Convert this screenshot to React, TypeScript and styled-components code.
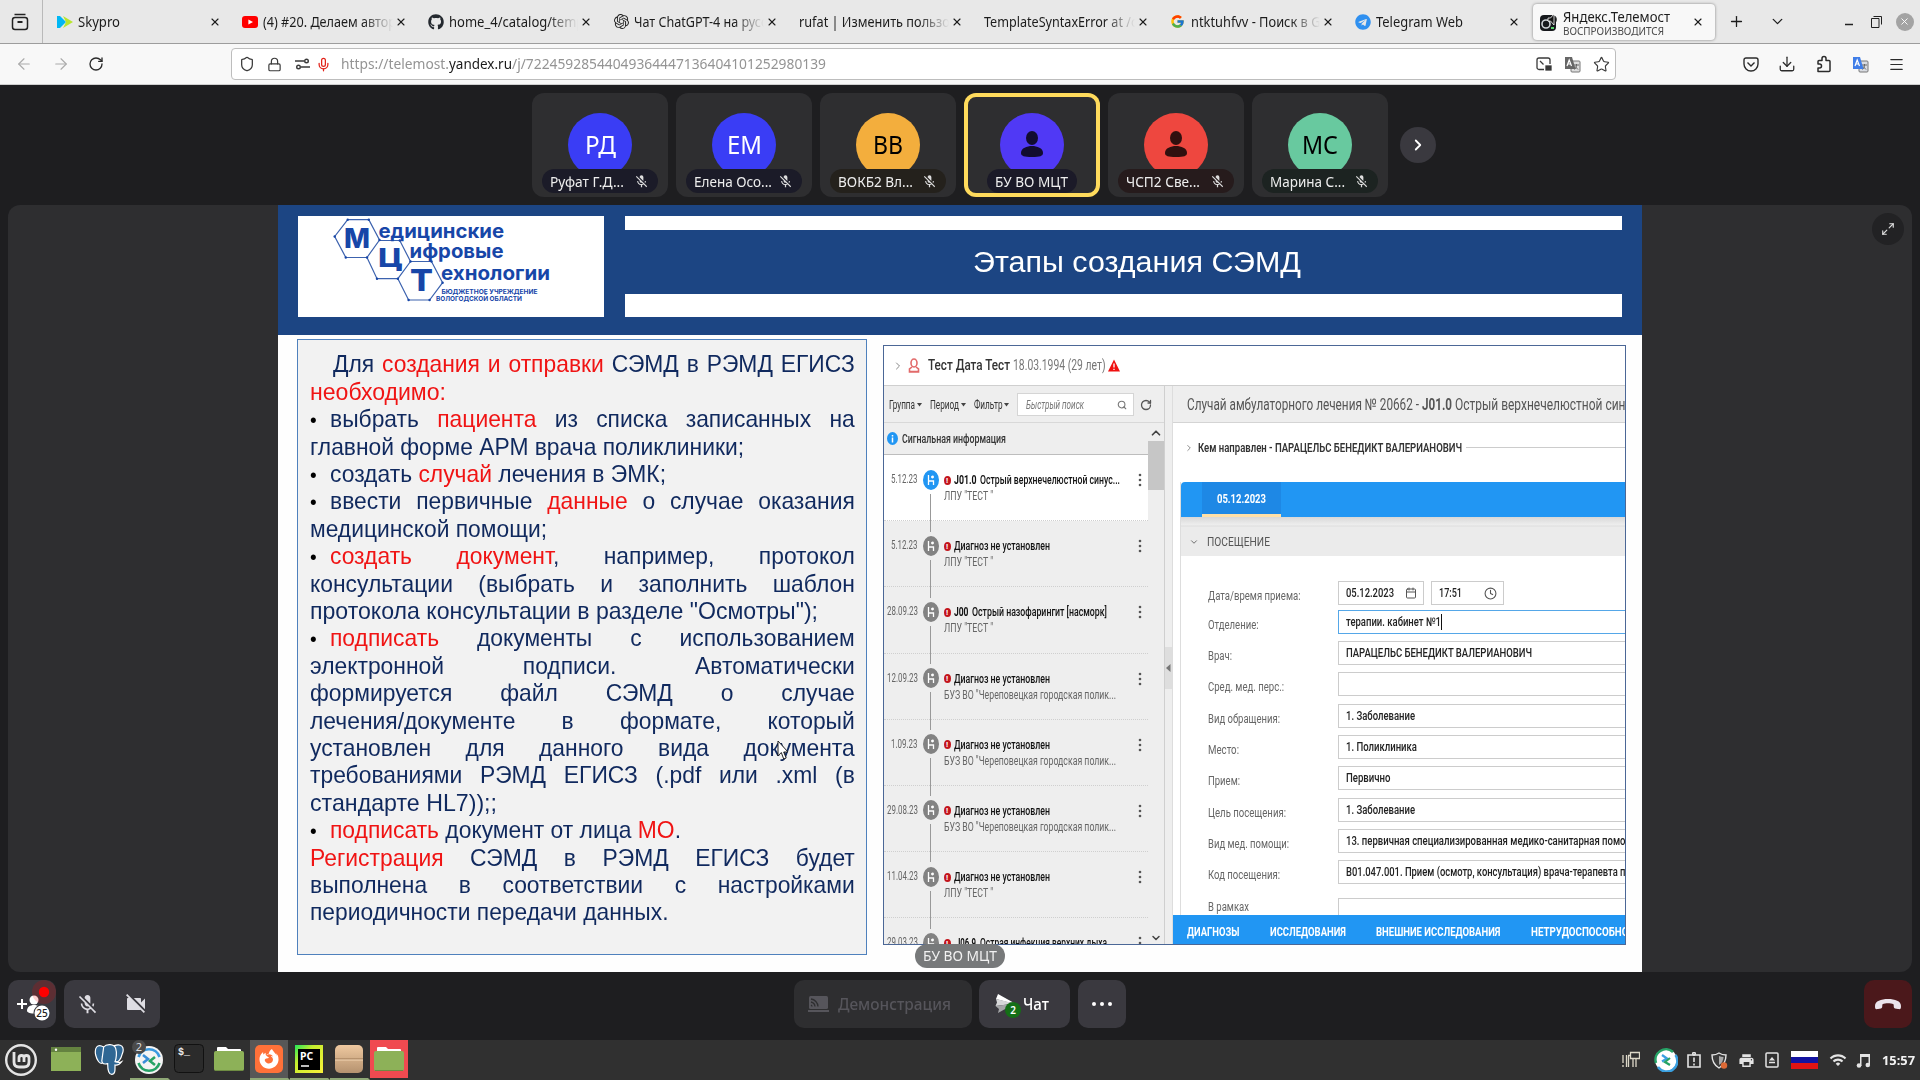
import React, { useLayoutEffect, useRef } from "react";
import styled, { createGlobalStyle, css } from "styled-components";
import {
  ArrowLeft, ArrowRight, ChevronDown, ChevronRight, ChevronUp, Download, Lock, Menu, Plus,
  RotateCw, Search, Shield, Star, X, Calendar, Clock, Mic, Maximize2,
} from "lucide-react";
import { FaGithub, FaTelegram, FaFirefoxBrowser } from "react-icons/fa";
import { FcGoogle } from "react-icons/fc";
import { SiOpenai } from "react-icons/si";
import { MdMicOff, MdVideocamOff, MdPrint, MdWifi } from "react-icons/md";

const ui = `"Noto Sans", "Open Sans", sans-serif`;
const arial = `"Liberation Sans", Arial, sans-serif`;
const roboto = `Roboto, "Noto Sans", sans-serif`;

const Global = createGlobalStyle`
  *, *::before, *::after { box-sizing: border-box; }
  body { margin: 0; background: #1e1e20; overflow: hidden; }
  svg { display: block; flex: none; }
`;

/* ---------- text of a fixed width ---------- */

const FitBox = styled.span<{ $w: number }>`
  display: inline-block;
  flex: none;
  width: ${(p) => p.$w}px;
  white-space: pre;
`;
const FitInner = styled.span`
  display: inline-block;
  white-space: pre;
  transform-origin: 0 50%;
`;

function Fit({ w, children }: { w: number; children: React.ReactNode }) {
  const ref = useRef<HTMLSpanElement>(null);
  useLayoutEffect(() => {
    const el = ref.current;
    if (!el) return;
    const natural = parseFloat(getComputedStyle(el).width);
    if (natural > 0) el.style.transform = `scaleX(${w / natural})`;
  }, [w, children]);
  return (
    <FitBox $w={w}>
      <FitInner ref={ref}>{children}</FitInner>
    </FitBox>
  );
}

/* ---------- browser ---------- */

const Screen = styled.div`
  width: 1920px;
  height: 1080px;
  display: flex;
  flex-direction: column;
  overflow: hidden;
  background: #1e1e20;
  font-family: ${ui};
`;
const TabStrip = styled.div`
  height: 44px;
  flex: none;
  display: flex;
  align-items: center;
  background: #e8e8e8;
  border-bottom: 1px solid #9d9d9d;
  color: #1c1c1c;
`;
const FirefoxView = styled.div`
  width: 43px;
  height: 43px;
  margin-right: 4.500px;
  padding-left: 11px;
  flex: none;
  display: flex;
  align-items: center;
  border-right: 1px solid #b9b9b9;
`;
const Tab = styled.div<{ $active?: boolean }>`
  width: ${(p) => (p.$active ? 182 : 185.5)}px;
  height: 36px;
  flex: none;
  display: flex;
  align-items: center;
  padding: 0 10px 0 9px;
  font-size: 13.5px;
  ${(p) =>
    p.$active &&
    css`
      margin-left: 1px;
      padding: 0 9px 0 8px;
      background: #f8f8f8;
      border-radius: 4px;
      box-shadow: 0 0 3px rgba(0, 0, 0, 0.45);
    `}
`;
const TabIcon = styled.span`
  width: 16px;
  height: 16px;
  margin-right: 5px;
  flex: none;
  display: flex;
  align-items: center;
  justify-content: center;
`;
const TabTitle = styled.span<{ $fade?: boolean }>`
  flex: 1;
  min-width: 0;
  overflow: hidden;
  display: flex;
  flex-direction: column;
  line-height: 18px;
  ${(p) => p.$fade && css`mask-image: linear-gradient(to right, #000 calc(100% - 30px), transparent);`}
`;
const TabStatus = styled.span`
  font-size: 10px;
  line-height: 10px;
  color: #4a4a4a;
`;
const CloseSlot = styled.span`
  width: 16px;
  flex: none;
  display: flex;
  justify-content: center;
`;
const WindowButtons = styled.div`
  flex: 1;
  display: flex;
  align-items: center;
  padding: 0 9px 0 13px;
`;
const Gap = styled.span<{ $w: number }>`
  width: ${(p) => p.$w}px;
  flex: none;
`;
const WindowClose = styled.span`
  width: 18px;
  height: 18px;
  flex: none;
  border-radius: 50%;
  background: #a3a3a3;
  color: #fff;
  display: flex;
  align-items: center;
  justify-content: center;
`;
const NavBar = styled.div`
  height: 41px;
  flex: none;
  display: flex;
  align-items: center;
  padding: 0 15px 0 14px;
  background: #f8f8f8;
  border-bottom: 1px solid #cfcfcf;
  color: #2b2b2b;
`;
const NavButtons = styled.div`
  width: 217px;
  flex: none;
  display: flex;
  align-items: center;
  padding-left: 1px;
  gap: 18.500px;
`;
const Dim = styled.span`
  color: #aaa;
`;
const UrlBar = styled.div`
  width: 1385px;
  height: 32px;
  flex: none;
  display: flex;
  align-items: center;
  padding: 0 5px 0 7px;
  background: #fff;
  border: 1px solid #bdbdbd;
  border-radius: 4px;
  font-size: 13.5px;
  color: #949494;
`;
const UrlHost = styled.span`
  color: #1a1a1a;
`;
const UrlIcons = styled.span`
  margin-left: auto;
  display: flex;
  align-items: center;
  gap: 12px;
  color: #3a3a3a;
`;
const NavRight = styled.div`
  margin-left: auto;
  display: flex;
  align-items: center;
  gap: 19px;
`;

interface TabData { icon?: React.ReactNode; title: string; w: number; fade?: boolean }

const YoutubeIcon = () => (
  <svg width="16" height="16" viewBox="0 0 16 16">
    <rect y="2" width="16" height="12" rx="3" fill="#f00" />
    <path d="M6.4 5.4v5.2L11 8z" fill="#fff" />
  </svg>
);

const tabs: TabData[] = [
  { icon: <svg width="16" height="16" viewBox="0 0 16 16"><path d="M0 2h3l6 6-6 6H0z" fill="#00b7f4" /><path d="M6 2l10 6-10 6 3-6z" fill="#b8e62e" /></svg>, title: "Skypro", w: 42 },
  { icon: <YoutubeIcon />, title: "(4) #20. Делаем авториз", w: 147, fade: true },
  { icon: <FaGithub size={16} color="#24292f" />, title: "home_4/catalog/templa", w: 146, fade: true },
  { icon: <SiOpenai size={15} color="#222" />, title: "Чат ChatGPT-4 на русско", w: 147, fade: true },
  { title: "rufat | Изменить пользов", w: 158, fade: true },
  { title: "TemplateSyntaxError at /ca", w: 160, fade: true },
  { icon: <FcGoogle size={15} />, title: "ntktuhfvv - Поиск в Goo", w: 145, fade: true },
  { icon: <FaTelegram size={16} color="#2f90f0" />, title: "Telegram Web", w: 87 },
];

function Browser() {
  return (
    <>
      <TabStrip>
        <FirefoxView>
          <svg width="18" height="18" viewBox="0 0 18 18" fill="none" stroke="#222" strokeWidth="1.5">
            <path d="M3.5 1.5h11" /><rect x="1.5" y="4.5" width="15" height="12" rx="2.5" /><path d="M6.5 9h5" strokeWidth="2" />
          </svg>
        </FirefoxView>
        {tabs.map((t) => (
          <Tab key={t.title}>
            {t.icon && <TabIcon>{t.icon}</TabIcon>}
            <TabTitle $fade={t.fade}><Fit w={t.w}>{t.title}</Fit></TabTitle>
            <CloseSlot><X size={12} strokeWidth={2.2} /></CloseSlot>
          </Tab>
        ))}
        <Tab $active>
          <TabIcon>
            <svg width="18" height="18" viewBox="0 0 18 18">
              <rect y="2" width="16" height="16" rx="4" fill="#16181c" />
              <circle cx="6" cy="11" r="4" fill="none" stroke="#cfd3d8" strokeWidth="1.6" />
              <path d="M8 5h2.5L14 1v11l-3.500-4H8z" fill="#111" stroke="#fff" strokeWidth=".8" />
              <path d="M15.500 3.500q2 3 0 6" stroke="#222" fill="none" />
              <path d="M11 15h3" stroke="#58d36c" strokeWidth="2" />
            </svg>
          </TabIcon>
          <Gap $w={1} />
          <TabTitle>
            <Fit w={107}>Яндекс.Телемост</Fit>
            <TabStatus><Fit w={101}>ВОСПРОИЗВОДИТСЯ</Fit></TabStatus>
          </TabTitle>
          <CloseSlot><X size={12} strokeWidth={2.2} /></CloseSlot>
        </Tab>
        <WindowButtons>
          <Plus size={17} strokeWidth={1.8} />
          <Gap $w={24} />
          <ChevronDown size={17} strokeWidth={1.8} />
          <Gap $w={58} />
          <svg width="10" height="12" viewBox="0 0 10 12"><path d="M1 8.500h8" stroke="#222" strokeWidth="1.500" /></svg>
          <Gap $w={17} />
          <svg width="11" height="12" viewBox="0 0 11 12" fill="none" stroke="#222"><path d="M2.500.5h8v8M.5 2.500h7.500v9H.5z" /></svg>
          <Gap $w={14} />
          <WindowClose><X size={11} /></WindowClose>
        </WindowButtons>
      </TabStrip>
      <NavBar>
        <NavButtons>
          <Dim><ArrowLeft size={18} strokeWidth={1.5} /></Dim>
          <Dim><ArrowRight size={18} strokeWidth={1.5} /></Dim>
          <RotateCw size={16} strokeWidth={2} />
        </NavButtons>
        <UrlBar>
          <Shield size={16} color="#3a3a3a" strokeWidth={1.9} />
          <Gap $w={12} />
          <Lock size={15} color="#3a3a3a" strokeWidth={1.9} />
          <Gap $w={13} />
          <svg width="15" height="12" viewBox="0 0 15 12" fill="none" stroke="#3a3a3a" strokeWidth="1.400"><path d="M0 3h9M6 9h9" /><circle cx="11.500" cy="3" r="1.800" /><circle cx="3.500" cy="9" r="1.800" /></svg>
          <Gap $w={6} />
          <Mic size={15} color="#e2231a" strokeWidth={2} />
          <Gap $w={10} />
          <Fit w={108}>https://telemost.</Fit>
          <UrlHost><Fit w={63}>yandex.ru</Fit></UrlHost>
          <Fit w={314}>/j/72245928544049364447136404101252980139</Fit>
          <UrlIcons>
            <svg width="16" height="14" viewBox="0 0 16 14" fill="none" stroke="#3a3a3a" strokeWidth="1.300"><path d="M8 12.500H3a2 2 0 0 1-2-2V3a2 2 0 0 1 2-2h9a2 2 0 0 1 2 2v4M4 4l3.500 3.500" /><rect x="10" y="9" width="5" height="4" fill="#3a3a3a" /></svg>
            <Translate back="#666" front="#ddd" />
            <Star size={17} strokeWidth={1.6} />
          </UrlIcons>
        </UrlBar>
        <NavRight>
          <svg width="16" height="15" viewBox="0 0 16 15" fill="none" stroke="#2b2b2b" strokeWidth="1.400"><path d="M1 3a2 2 0 0 1 2-2h10a2 2 0 0 1 2 2v4a7 7 0 0 1-14 0z" /><path d="M4.500 5.500L8 9l3.500-3.500" /></svg>
          <Download size={18} strokeWidth={1.7} />
          <svg width="18" height="18" viewBox="0 0 18 18" fill="none" stroke="#2b2b2b" strokeWidth="1.500" strokeLinejoin="round"><path d="M3 16.500h11q1 0 1-1V6.500q0-1-1-1h-3V3.500a2 2 0 0 0-4 0v2H4q-1 0-1 1V9h1.500a2 2 0 0 1 0 4H3z" /></svg>
          <Translate back="#3f7de8" front="#d9dce2" />
          <Menu size={17} strokeWidth={1.7} />
        </NavRight>
      </NavBar>
    </>
  );
}

function Translate({ back, front }: { back: string; front: string }) {
  return (
    <svg width="17" height="17" viewBox="0 0 17 17">
      <rect x="7" y="5" width="9" height="11" rx="1" fill={front} stroke="#777" />
      <path d="M10 9h5M12.500 8v1q0 3-2 4.500M11 10.500l3 3" stroke="#666" fill="none" />
      <path d="M1 1h7l3.500 12H1z" fill={back} />
      <path d="M3 10l2.200-6L7.500 10M3.700 8h3" stroke="#fff" fill="none" strokeWidth="1.200" />
    </svg>
  );
}

/* ---------- participants ---------- */

const Participants = styled.div`
  height: 120px;
  flex: none;
  display: flex;
  align-items: flex-start;
  justify-content: flex-start;
  gap: 8px;
  padding: 8px 0 0 532px;
`;
const Tile = styled.div<{ $active?: boolean }>`
  width: 136px;
  height: 104px;
  display: flex;
  flex-direction: column;
  align-items: center;
  padding-top: 20px;
  border-radius: 12px;
  background: #2e2e30;
  box-shadow: ${(p) => (p.$active ? "inset 0 0 0 4px #ffdb5c" : "none")};
`;
const Avatar = styled.div<{ $bg: string; $fg: string }>`
  width: 64px;
  height: 64px;
  flex: none;
  border-radius: 50%;
  display: flex;
  align-items: center;
  justify-content: center;
  padding-bottom: 2px;
  background: ${(p) => p.$bg};
  color: ${(p) => p.$fg};
  font-size: 25px;
`;
const NameTag = styled.div<{ $bg: string; $w: number }>`
  width: ${(p) => p.$w}px;
  height: 24px;
  margin-top: -8px;
  z-index: 1;
  display: flex;
  align-items: center;
  justify-content: space-between;
  padding: 0 9px 0 8px;
  border-radius: 12px;
  background: ${(p) => p.$bg};
  color: #eee;
  font-size: 14px;
  line-height: 23px;
`;
const NextButton = styled.div`
  width: 36px;
  height: 36px;
  margin: 34px 0 0 4px;
  border-radius: 50%;
  background: #3a393f;
  color: #fff;
  display: flex;
  align-items: center;
  justify-content: center;
`;

const people = [
  { initials: "РД", iw: 31, name: "Руфат Г.Д...", w: 74, bg: "#3a3df5", fg: "#fff", tag: "#1b1b28", muted: true },
  { initials: "ЕМ", iw: 35, name: "Елена Осо...", w: 78, bg: "#3a3df5", fg: "#fff", tag: "#1b1b28", muted: true },
  { initials: "ВВ", iw: 30, name: "ВОКБ2 Вл...", w: 75, bg: "#f3ae3d", fg: "#000", tag: "#24211c", muted: true },
  { initials: "", iw: 0, name: "БУ ВО МЦТ", w: 73, bg: "#5039f5", fg: "#120c30", tag: "#1b1a28", active: true },
  { initials: "", iw: 0, name: "ЧСП2 Све...", w: 74, bg: "#ee473f", fg: "#30100f", tag: "#261b1c", muted: true },
  { initials: "МС", iw: 36, name: "Марина С...", w: 75, bg: "#68c99f", fg: "#000", tag: "#1c2321", muted: true },
];

function ParticipantStrip() {
  return (
    <Participants>
      {people.map((p) => (
        <Tile key={p.name} $active={p.active}>
          <Avatar $bg={p.bg} $fg={p.fg}>
            {p.initials ? <Fit w={p.iw}>{p.initials}</Fit> : (
              <svg width="22" height="28" viewBox="0 0 22 28" fill={p.fg}><ellipse cx="11" cy="8" rx="6" ry="7" /><path d="M0 23c0-5 6-7 11-7s11 2 11 7c0 3-3 4-11 4S0 26 0 23z" /></svg>
            )}
          </Avatar>
          <NameTag $bg={p.tag} $w={p.muted ? 116 : 90}>
            <Fit w={p.w}>{p.name}</Fit>
            {p.muted && <MdMicOff size={15} color="#ddd" />}
          </NameTag>
        </Tile>
      ))}
      <NextButton><ChevronRight size={18} strokeWidth={2.4} /></NextButton>
    </Participants>
  );
}

/* ---------- slide ---------- */

const Stage = styled.div`
  height: 767px;
  margin: 0 8px;
  flex: none;
  display: flex;
  justify-content: center;
  border-radius: 12px;
  background: #2e2e30;
  position: relative;
`;
const ExpandButton = styled.div`
  position: absolute;
  right: 8px;
  top: 8px;
  width: 32px;
  height: 32px;
  border-radius: 50%;
  background: #222224;
  color: #ddd;
  display: flex;
  align-items: center;
  justify-content: center;
`;
const SpeakerTag = styled.div`
  position: absolute;
  left: 907px;
  top: 739px;
  width: 90px;
  height: 24px;
  border-radius: 12px;
  background: #77797a;
  color: #f2f2f2;
  font-size: 15px;
  line-height: 23px;
  padding-left: 8px;
`;
const PointerMark = styled.div`
  position: absolute;
  left: 769px;
  top: 535px;
`;
const Slide = styled.div`
  width: 1364px;
  height: 767px;
  background: #fefefe;
  display: flex;
  flex-direction: column;
`;
const SlideHeader = styled.div`
  height: 130px;
  flex: none;
  display: flex;
  padding: 11px 20px 18px 20px;
  gap: 20.500px;
  background: #1c4583;
`;
const LogoBox = styled.div`
  width: 306px;
  height: 101px;
  flex: none;
  background: #fff;
`;
const TitleBox = styled.div`
  flex: 1;
  display: flex;
  align-items: center;
  justify-content: center;
  border-top: 14px solid #fff;
  border-bottom: 23px solid #fff;
  color: #fff;
  font: 29px/40px ${arial};
  padding-left: 28px;
`;
const SlideBody = styled.div`
  flex: 1;
  display: flex;
  align-items: flex-start;
  padding: 4px 16px 0 19px;
  gap: 16px;
`;
const TextPanel = styled.div`
  width: 570px;
  height: 616px;
  flex: none;
  padding: 9.500px 12px 0;
  background: #f2f2f2;
  border: 1px solid #4f81bd;
`;
const K = 0.952;
const Paragraphs = styled.div`
  width: ${544.8 / K}px;
  transform: scaleX(${K});
  transform-origin: 0 0;
  font: 24px/27.400px ${arial};
  color: #10295e;
`;
const Line = styled.div<{ $justify?: boolean; $indent?: number }>`
  height: 27.400px;
  white-space: ${(p) => (p.$justify ? "normal" : "nowrap")};
  padding-left: ${(p) => (p.$indent ?? 0) / K}px;
  text-align-last: ${(p) => (p.$justify ? "justify" : "left")};
  &:first-child {
    height: 28.400px;
  }
`;
const Bullet = styled.span`
  display: inline-block;
  width: ${20 / K}px;
  color: #000;
  font-size: 20px;
  text-align-last: left;
`;
const Red = styled.span`
  color: #f01414;
`;

interface SlideLine { t: string; bullet?: boolean; indent?: number; w?: number }

const slideLines: SlideLine[] = [
  { t: "Для *создания и отправки* СЭМД в РЭМД ЕГИСЗ", indent: 23 },
  { t: "*необходимо:*", w: 136 },
  { t: "выбрать *пациента* из списка записанных на", bullet: true },
  { t: "главной форме АРМ врача поликлиники;", w: 434 },
  { t: "создать *случай* лечения в ЭМК;", bullet: true, w: 336 },
  { t: "ввести первичные *данные* о случае оказания", bullet: true },
  { t: "медицинской помощи;", w: 237 },
  { t: "*создать документ*, например, протокол", bullet: true },
  { t: "консультации (выбрать и заполнить шаблон" },
  { t: "протокола консультации в разделе \"Осмотры\");", w: 508 },
  { t: "*подписать* документы с использованием", bullet: true },
  { t: "электронной подписи. Автоматически" },
  { t: "формируется файл СЭМД о случае" },
  { t: "лечения/документе в формате, который" },
  { t: "установлен для данного вида документа" },
  { t: "требованиями РЭМД ЕГИСЗ (.pdf или .xml (в" },
  { t: "стандарте HL7));;", w: 187 },
  { t: "*подписать* документ от лица *МО*.", bullet: true, w: 351 },
  { t: "*Регистрация* СЭМД в РЭМД ЕГИСЗ будет" },
  { t: "выполнена в соответствии с настройками" },
  { t: "периодичности передачи данных.", w: 358.5 },
];

const marked = (t: string) => t.split("*").map((s, i) => (i % 2 ? <Red key={i}>{s}</Red> : s));

function Logo() {
  const blue = "#1746a8";
  return (
    <svg width="305" height="101" viewBox="298 216 305 101" fontFamily={`Inter, Roboto, sans-serif`} fontWeight="700" fill={blue}>
      <g fill="none" stroke="#3c62ae" strokeWidth="1.200">
        <path d="M347.700 219.700H368.800L379.500 240L367 257.500H345.800L334.700 236.500Z" />
        <path d="M379.500 240.500H399.800L410.500 261.500L397.900 278.700H377L367 257.500" />
        <path d="M410.500 261.500H431.500L442.600 282.700L429.600 300H408.600L397.900 278.700" />
      </g>
      {[[347.7, 219.7], [368.8, 219.7], [334.7, 236.5], [379.5, 240], [367, 257.5], [345.8, 257.5], [399.8, 240.5], [410.5, 261.5], [397.9, 278.7], [377, 278.7], [431.5, 261.5], [442.6, 282.7], [429.6, 300], [408.6, 300]].map(([x, y], i) => (
        <circle key={i} cx={x} cy={y} r="1.200" />
      ))}
      <text x="344" y="247.500" fontSize="27" fontWeight="800" textLength="26" lengthAdjust="spacingAndGlyphs">М</text>
      <text x="378" y="267" fontSize="26" fontWeight="800" textLength="25" lengthAdjust="spacingAndGlyphs">Ц</text>
      <text x="410" y="291" fontSize="30" fontWeight="800" textLength="23" lengthAdjust="spacingAndGlyphs">Т</text>
      <text x="378.500" y="237.500" fontSize="19.500" textLength="125.500" lengthAdjust="spacingAndGlyphs">едицинские</text>
      <text x="409.500" y="258" fontSize="19.500" textLength="94" lengthAdjust="spacingAndGlyphs">ифровые</text>
      <text x="441" y="279.500" fontSize="19.500" textLength="109" lengthAdjust="spacingAndGlyphs">ехнологии</text>
      <text x="441.500" y="293.500" fontSize="6.800" textLength="96" lengthAdjust="spacingAndGlyphs">БЮДЖЕТНОЕ УЧРЕЖДЕНИЕ</text>
      <text x="436" y="300.500" fontSize="6.800" textLength="86" lengthAdjust="spacingAndGlyphs">ВОЛОГОДСКОЙ ОБЛАСТИ</text>
    </svg>
  );
}

/* ---------- medical application shown on the slide ---------- */

const MedFrame = styled.div`
  width: 743.500px;
  height: 600px;
  margin-top: 6px;
  margin-left: -0.500px;
  flex: none;
  display: flex;
  flex-direction: column;
  overflow: hidden;
  border: 1.500px solid #4b6796;
  background: #fff;
  font-family: ${roboto};
  font-size: 12px;
  line-height: 16px;
  color: #333;
`;
const Patient = styled.div`
  height: 40px;
  flex: none;
  display: flex;
  align-items: center;
  padding-left: 8px;
  border-bottom: 1.500px solid #cfcfcf;
  font-size: 14.500px;
  font-weight: 500;
  color: #333;
`;
const Light = styled.span`
  font-weight: 400;
  color: #777;
`;
const Panes = styled.div`
  flex: 1;
  min-height: 0;
  display: flex;
`;
const ListPane = styled.div`
  width: 280px;
  flex: none;
  display: flex;
  flex-direction: column;
  background: #eee;
  overflow: hidden;
`;
const Filters = styled.div`
  height: 37px;
  flex: none;
  display: flex;
  align-items: center;
  padding: 1.500px 0 0 5px;
  border-bottom: 1px solid #d8d8d8;
  font-size: 12px;
`;
const SearchBox = styled.div`
  width: 117px;
  height: 23px;
  display: flex;
  align-items: center;
  justify-content: space-between;
  padding: 0 6px 0 8px;
  background: #fff;
  border: 1px solid #d5d5d5;
  font-style: italic;
  color: #777;
`;
const ListArea = styled.div`
  flex: 1;
  min-height: 0;
  display: flex;
`;
const ListColumn = styled.div`
  width: 264px;
  overflow: hidden;
`;
const ScrollBar = styled.div`
  width: 16px;
  display: flex;
  flex-direction: column;
  align-items: center;
  padding-top: 3px;
  color: #444;
`;
const Thumb = styled.div`
  width: 16px;
  height: 49px;
  margin-top: 1px;
  margin-bottom: auto;
  background: #c6c6c6;
`;
const Signal = styled.div`
  height: 32px;
  display: flex;
  align-items: center;
  padding-left: 3px;
  gap: 4px;
  border-bottom: 1.500px solid #bdbdbd;
  font-weight: 500;
`;
const Item = styled.div<{ $selected?: boolean }>`
  height: 66.200px;
  display: flex;
  border-bottom: 1px dotted #cfcfcf;
  background: ${(p) => (p.$selected ? "#fff" : "transparent")};
`;
const ItemDate = styled.div`
  width: 34px;
  padding-top: 16px;
  display: flex;
  justify-content: flex-end;
  color: #666;
`;
const Rail = styled.div`
  width: 26px;
  height: 66px;
  flex: none;
  padding-top: 14.500px;
  display: flex;
  flex-direction: column;
  align-items: center;
`;
const RailDot = styled.div<{ $bg: string }>`
  width: 16px;
  height: 20px;
  flex: none;
  border-radius: 50%;
  background: ${(p) => p.$bg};
  display: flex;
  align-items: center;
  justify-content: center;
`;
const RailLine = styled.div`
  width: 1px;
  height: 38px;
  flex: none;
  margin-top: 4px;
  background: #999;
`;
const ItemText = styled.div`
  width: 194.500px;
  padding-top: 17px;
  flex: none;
`;
const ItemTitle = styled.div`
  display: flex;
  align-items: center;
  gap: 3.500px;
  color: #111;
  font-weight: 500;
`;
const ItemSub = styled.div`
  color: #666;
`;
const Alert = styled.span`
  width: 7px;
  height: 9px;
  border-radius: 50%;
  background: #c3151c;
  color: #fff;
  display: flex;
  justify-content: center;
  font-size: 8px;
  line-height: 9px;
  font-weight: 700;
`;
const Splitter = styled.div`
  width: 9px;
  flex: none;
  display: flex;
  flex-direction: column;
  background: #eee;
  border-left: 1px solid #cfcfcf;
  border-right: 1px solid #ddd;
`;
const SplitHandle = styled.div`
  margin-top: 261px;
  height: 42px;
  display: flex;
  align-items: center;
  background: #dedede;
`;
const CasePane = styled.div`
  flex: 1;
  min-width: 0;
  display: flex;
  flex-direction: column;
  overflow: hidden;
`;
const CaseHeader = styled.div`
  height: 37px;
  flex: none;
  display: flex;
  align-items: center;
  gap: 3px;
  padding: 2px 0 0 14px;
  background: #eee;
  border-bottom: 1.500px solid #d4d4d4;
  font-size: 16px;
  line-height: 20px;
  color: #555;
  white-space: nowrap;
`;
const Referrer = styled.div`
  height: 49px;
  flex: none;
  display: flex;
  align-items: center;
  gap: 4px;
  padding-left: 11px;
  font-weight: 600;
`;
const Rule = styled.div`
  flex: 1;
  height: 1px;
  background: #ccc;
`;
const VisitCard = styled.div`
  flex: 1;
  min-height: 0;
  margin: 10px 0 0 7px;
  border-left: 1px solid #ddd;
  overflow: hidden;
`;
const DateTabs = styled.div`
  height: 35px;
  padding-left: 21px;
  background: #2196f3;
  border-top-left-radius: 4px;
`;
const DateTab = styled.div`
  width: 79px;
  height: 35px;
  display: flex;
  align-items: center;
  justify-content: center;
  padding-top: 2px;
  background: #1e88e5;
  border-bottom: 3px solid #ffe0a8;
  color: #fff;
  font-weight: 700;
`;
const VisitTitle = styled.div`
  height: 39px;
  display: flex;
  align-items: center;
  gap: 8px;
  padding: 11px 0 0 8px;
  background: linear-gradient(#d8d8d8, #eee 8px, #ddd 9px, #ebebeb 10px);
  font-size: 13px;
  color: #555;
`;
const Form = styled.div`
  padding: 24px 0 0 27px;
`;
const Field = styled.div<{ $h: number }>`
  height: ${(p) => p.$h}px;
  display: flex;
  align-items: center;
`;
const Label = styled.div<{ $raise?: boolean }>`
  width: 130.500px;
  flex: none;
  padding: ${(p) => (p.$raise ? "0 0 6px" : "6px 0 0")};
  color: #666;
`;
const Input = styled.div<{ $w?: number; $focus?: boolean }>`
  width: ${(p) => p.$w ?? 400}px;
  height: 24px;
  flex: none;
  margin-right: 7px;
  display: flex;
  align-items: center;
  justify-content: space-between;
  padding: 0 6px 0 7px;
  border: 1px solid ${(p) => (p.$focus ? "#55a7e8" : "#ccc")};
  font-weight: 500;
  color: #222;
`;
const Caret = styled.span`
  border-right: 1px solid #111;
`;
const Sections = styled.div`
  height: 29px;
  flex: none;
  display: flex;
  align-items: center;
  gap: 30.500px;
  padding: 5px 0 0 14px;
  background: #2196f3;
  color: #fff;
  font-weight: 700;
  overflow: hidden;
`;

const items = [
  { date: "5.12.23", dw: 26.5, code: "J01.0", cw: 22.5, title: "Острый верхнечелюстной синус...", w: 140, sub: "ЛПУ \"ТЕСТ \"", sw: 49, sel: true },
  { date: "5.12.23", dw: 26.5, title: "Диагноз не установлен", w: 96, sub: "ЛПУ \"ТЕСТ \"", sw: 49 },
  { date: "28.09.23", dw: 31, code: "J00", cw: 14.5, title: "Острый назофарингит [насморк]", w: 135, sub: "ЛПУ \"ТЕСТ \"", sw: 49 },
  { date: "12.09.23", dw: 31, title: "Диагноз не установлен", w: 96, sub: "БУЗ ВО \"Череповецкая городская полик...", sw: 172 },
  { date: "1.09.23", dw: 26.5, title: "Диагноз не установлен", w: 96, sub: "БУЗ ВО \"Череповецкая городская полик...", sw: 172 },
  { date: "29.08.23", dw: 31, title: "Диагноз не установлен", w: 96, sub: "БУЗ ВО \"Череповецкая городская полик...", sw: 172 },
  { date: "11.04.23", dw: 31, title: "Диагноз не установлен", w: 96, sub: "ЛПУ \"ТЕСТ \"", sw: 49 },
  { date: "29.03.23", dw: 31, code: " J06.9", cw: 22, title: "Острая инфекция верхних дыха...", w: 134, sub: "", sw: 1 },
];

const fields: { l: string; lw: number; v: string; w: number; focus?: boolean }[] = [
  { l: "Отделение:", lw: 50.5, v: "терапии. кабинет №1", w: 95, focus: true },
  { l: "Врач:", lw: 24, v: "ПАРАЦЕЛЬС БЕНЕДИКТ ВАЛЕРИАНОВИЧ", w: 186 },
  { l: "Сред. мед. перс.:", lw: 76, v: "", w: 0 },
  { l: "Вид обращения:", lw: 72, v: "1. Заболевание", w: 69 },
  { l: "Место:", lw: 31, v: "1. Поликлиника", w: 71 },
  { l: "Прием:", lw: 32, v: "Первично", w: 44.5 },
  { l: "Цель посещения:", lw: 78, v: "1. Заболевание", w: 69 },
  { l: "Вид мед. помощи:", lw: 81, v: "13. первичная специализированная медико-санитарная помощь", w: 293 },
  { l: "Код посещения:", lw: 72, v: "B01.047.001. Прием (осмотр, консультация) врача-терапевта первичный", w: 324 },
];

const Arrow = () => <svg width="5" height="4" viewBox="0 0 5 4"><path d="M0 0h5L2.500 3.500z" fill="#444" /></svg>;

function MedicalApp() {
  return (
    <MedFrame>
      <Patient>
        <ChevronRight size={12} color="#888" />
        <Gap $w={4} />
        <svg width="12" height="15" viewBox="0 0 12 15" fill="none" stroke="#e26a6a" strokeWidth="1.600"><ellipse cx="6" cy="5" rx="3" ry="4" /><path d="M4 9l-2.500 2v3h9v-3L8 9M1 13.500h10" /></svg>
        <Gap $w={8} />
        <Fit w={82}>Тест Дата Тест</Fit>
        <Gap $w={3} />
        <Light><Fit w={92.5}>18.03.1994 (29 лет)</Fit></Light>
        <Gap $w={3} />
        <svg width="12" height="13" viewBox="0 0 12 13"><path d="M6 .5L12 12.500H0z" fill="#f01010" /><path d="M6 4.500v4M6 9.800v1.200" stroke="#fff" strokeWidth="1.300" /></svg>
      </Patient>
      <Panes>
        <ListPane>
          <Filters>
            <Fit w={26}>Группа</Fit><Gap $w={2} /><Arrow /><Gap $w={8} />
            <Fit w={29}>Период</Fit><Gap $w={2} /><Arrow /><Gap $w={8} />
            <Fit w={28.5}>Фильтр</Fit><Gap $w={2} /><Arrow /><Gap $w={7.5} />
            <SearchBox><Fit w={58}>Быстрый поиск</Fit><Search size={10} strokeWidth={2.6} /></SearchBox>
            <Gap $w={6} />
            <RotateCw size={12} color="#555" strokeWidth={2.6} />
          </Filters>
          <ListArea>
            <ListColumn>
              <Signal>
                <svg width="11" height="13" viewBox="0 0 11 13"><ellipse cx="5.500" cy="6.500" rx="5.500" ry="6.500" fill="#2196f3" /><path d="M5.500 3v1.500M5.500 5.500v5" stroke="#fff" strokeWidth="1.500" /></svg>
                <Fit w={104}>Сигнальная информация</Fit>
              </Signal>
              {items.map((it, i) => (
                <Item key={i} $selected={it.sel}>
                  <ItemDate><Fit w={it.dw}>{it.date}</Fit></ItemDate>
                  <Rail>
                    <RailDot $bg={it.sel ? "#2196f3" : "#828282"}>
                      <svg width="8" height="12" viewBox="0 0 8 12" fill="none" stroke="#fff" strokeWidth="1.300"><path d="M1.500 1v10M1.500 7h5v4" /><circle cx="5.500" cy="3" r=".8" fill="#fff" /></svg>
                    </RailDot>
                    <RailLine />
                  </Rail>
                  <ItemText>
                    <ItemTitle>
                      <Alert>!</Alert>
                      {it.code && <b><Fit w={it.cw!}>{it.code}</Fit></b>}
                      <Fit w={it.w}>{it.title}</Fit>
                    </ItemTitle>
                    <ItemSub>{it.sub && <Fit w={it.sw}>{it.sub}</Fit>}</ItemSub>
                  </ItemText>
                  <svg width="4" height="44" viewBox="0 0 4 44" fill="#555"><circle cx="2" cy="20" r="1.300" /><circle cx="2" cy="25" r="1.300" /><circle cx="2" cy="30" r="1.300" /></svg>
                </Item>
              ))}
            </ListColumn>
            <ScrollBar>
              <ChevronUp size={14} strokeWidth={3} />
              <Thumb />
              <ChevronDown size={12} strokeWidth={3} />
            </ScrollBar>
          </ListArea>
        </ListPane>
        <Splitter>
          <SplitHandle><svg width="6" height="8" viewBox="0 0 6 8"><path d="M5.500 0v8L1 4z" fill="#777" /></svg></SplitHandle>
        </Splitter>
        <CasePane>
          <CaseHeader>
            <Fit w={232}>Случай амбулаторного лечения № 20662 -</Fit>
            <b><Fit w={30}>J01.0</Fit></b>
            <Fit w={195}>Острый верхнечелюстной синусит</Fit>
          </CaseHeader>
          <Referrer>
            <ChevronRight size={10} color="#777" />
            <Fit w={264}>Кем направлен - ПАРАЦЕЛЬС БЕНЕДИКТ ВАЛЕРИАНОВИЧ</Fit>
            <Rule />
          </Referrer>
          <VisitCard>
            <DateTabs><DateTab><Fit w={49}>05.12.2023</Fit></DateTab></DateTabs>
            <VisitTitle><ChevronDown size={10} /><Fit w={63}>ПОСЕЩЕНИЕ</Fit></VisitTitle>
            <Form>
              <Field $h={26.2}>
                <Label><Fit w={92.5}>Дата/время приема:</Fit></Label>
                <Input $w={86}><Fit w={48}>05.12.2023</Fit><Calendar size={12} color="#555" /></Input>
                <Input $w={73}><Fit w={23}>17:51</Fit><Clock size={13} color="#555" /></Input>
              </Field>
              {fields.map((f) => (
                <Field $h={31.3} key={f.l}>
                  <Label><Fit w={f.lw}>{f.l}</Fit></Label>
                  <Input $focus={f.focus}>
                    {f.focus ? <Caret><Fit w={f.w}>{f.v}</Fit></Caret> : f.v && <Fit w={f.w}>{f.v}</Fit>}
                  </Input>
                </Field>
              ))}
              <Field $h={43.3}>
                <Label $raise><Fit w={41}>В рамках</Fit></Label>
                <Input />
              </Field>
            </Form>
          </VisitCard>
          <Sections>
            <Fit w={52.5}>ДИАГНОЗЫ</Fit>
            <Fit w={76}>ИССЛЕДОВАНИЯ</Fit>
            <Fit w={124.5}>ВНЕШНИЕ ИССЛЕДОВАНИЯ</Fit>
            <Fit w={116}>НЕТРУДОСПОСОБНОСТЬ</Fit>
          </Sections>
        </CasePane>
      </Panes>
    </MedFrame>
  );
}

function Presentation() {
  return (
    <Stage>
      <Slide>
        <SlideHeader>
          <LogoBox><Logo /></LogoBox>
          <TitleBox><Fit w={328}>Этапы создания СЭМД</Fit></TitleBox>
        </SlideHeader>
        <SlideBody>
          <TextPanel>
            <Paragraphs>
              {slideLines.map((l) => (
                <Line key={l.t} $justify={!l.w} $indent={l.indent}>
                  {l.bullet && <Bullet>•</Bullet>}
                  {l.w ? <Fit w={l.w / K}>{marked(l.t)}</Fit> : marked(l.t)}
                </Line>
              ))}
            </Paragraphs>
          </TextPanel>
          <MedicalApp />
        </SlideBody>
      </Slide>
      <PointerMark>
        <svg width="12" height="20" viewBox="0 0 12 20"><path d="M1 1v15l3.300-3.500L6.700 19l2.500-1-2.500-6H11z" fill="#fff" stroke="#222" /></svg>
      </PointerMark>
      <SpeakerTag><Fit w={74}>БУ ВО МЦТ</Fit></SpeakerTag>
      <ExpandButton><Maximize2 size={14} /></ExpandButton>
    </Stage>
  );
}

/* ---------- call controls ---------- */

const Controls = styled.div`
  height: 68px;
  flex: none;
  display: flex;
  align-items: flex-start;
  padding: 8px 8px 0;
`;
const ControlButton = styled.div<{ $w: number; $bg?: string; $ml?: number; $pl?: number; $dim?: boolean }>`
  width: ${(p) => p.$w}px;
  height: 48px;
  margin-left: ${(p) => p.$ml ?? 0}px;
  padding-left: ${(p) => p.$pl ?? 0}px;
  flex: none;
  display: flex;
  align-items: center;
  justify-content: ${(p) => (p.$pl ? "flex-start" : "center")};
  border-radius: 10px;
  background: ${(p) => p.$bg ?? "#3a393f"};
  color: ${(p) => (p.$dim ? "#56555b" : "#fff")};
  font-size: 16px;
  font-weight: 500;
`;

function CallControls() {
  return (
    <Controls>
      <ControlButton $w={48}>
        <svg width="48" height="48" viewBox="0 0 48 48" fontFamily={ui}>
          <path d="M9 24h10M14 19v10" stroke="#fff" strokeWidth="2" />
          <circle cx="26" cy="20" r="4.500" fill="#fff" />
          <path d="M19 31c0-4 3-6 7-6s7 2 7 6-14 3-14 0z" fill="#fff" />
          <circle cx="36" cy="12" r="12" fill="#f00" opacity=".18" />
          <circle cx="36" cy="12" r="5.200" fill="#f00" />
          <circle cx="34" cy="33" r="8.500" fill="#3a393f" />
          <circle cx="34" cy="33" r="7.500" fill="#fff" />
          <text x="34" y="36.500" fontSize="10" textAnchor="middle" fill="#222">25</text>
        </svg>
      </ControlButton>
      <ControlButton $w={96} $ml={8}>
        <MdMicOff size={23} color="#dedde3" />
        <Gap $w={25} />
        <MdVideocamOff size={24} color="#dedde3" />
      </ControlButton>
      <ControlButton $w={178} $ml={634} $bg="#2e2e30" $pl={14} $dim>
        <svg width="22" height="18" viewBox="0 0 22 18"><rect x="1" y="1" width="19" height="13" rx="1.500" fill="#56555b" /><rect y="15" width="21" height="2" fill="#56555b" /><path d="M3 10a2 2 0 0 1 1 1.500M3 7a5 5 0 0 1 4 4.500M3 4a8 8 0 0 1 7 7.500" stroke="#2e2e30" fill="none" strokeWidth="1.300" /></svg>
        <Gap $w={8} />
        <Fit w={113}>Демонстрация</Fit>
      </ControlButton>
      <ControlButton $w={91} $ml={7} $pl={15}>
        <svg width="28" height="28" viewBox="0 0 28 28" fontFamily={ui}>
          <path d="M4 4l17 9.500L13 12 2 9z" fill="#fff" /><path d="M2 9l19 4.500L1.500 16 3 12.500z" fill="#d6d7d8" /><path d="M1.500 16L21 13.500 4 23l1-4z" fill="#a4a5a7" />
          <circle cx="19" cy="20" r="8" fill="#146f16" />
          <text x="19" y="23.500" fontSize="10" fontWeight="600" textAnchor="middle" fill="#fff">2</text>
        </svg>
        <Gap $w={1} />
        <Fit w={26}>Чат</Fit>
      </ControlButton>
      <ControlButton $w={48} $ml={8}>
        <svg width="20" height="4" viewBox="0 0 20 4" fill="#fff"><circle cx="2" cy="2" r="2" /><circle cx="10" cy="2" r="2" /><circle cx="18" cy="2" r="2" /></svg>
      </ControlButton>
      <ControlButton $w={48} $ml={738} $bg="#4b181b">
        <svg width="26" height="12" viewBox="0 0 26 12"><path d="M0 8C0 3 6 1 13 1s13 2 13 7c0 3-.5 3.500-3 3l-3-.6c-1.300-.3-1.300-1.400-1.300-4C17 5.600 15 5.300 13 5.300s-4 .3-5.700 1.100c0 2.600 0 3.700-1.300 4L3 11C.5 11.500 0 11 0 8z" fill="#ebe4ec" /></svg>
      </ControlButton>
    </Controls>
  );
}

/* ---------- desktop panel ---------- */

const Panel = styled.div`
  height: 40px;
  flex: none;
  display: flex;
  align-items: flex-start;
  background: #303030;
`;
const Launcher = styled.div<{ $w?: number; $bg?: string; $run?: boolean }>`
  width: ${(p) => p.$w ?? 40}px;
  height: 40px;
  flex: none;
  display: flex;
  align-items: center;
  justify-content: center;
  background: ${(p) => p.$bg ?? "transparent"};
  background-clip: padding-box;
  border-right: 2px solid transparent;
  border-bottom: 2px solid ${(p) => (p.$run ? "#8fa876" : "transparent")};
`;
const Tray = styled.div`
  margin-left: auto;
  height: 40px;
  display: flex;
  align-items: center;
  padding-right: 5px;
  color: #e4e4e4;
`;
const TimeText = styled.span`
  font-size: 13px;
  font-weight: 700;
  color: #f2f2f2;
`;

const FolderIcon = () => (
  <svg width="30" height="26" viewBox="0 0 30 26"><path d="M3 5V2q0-1 1-1h8l2 2h12q1 0 1 1v2z" fill="#fff" /><rect y="5" width="30" height="20" rx="2" fill="#8db158" /><path d="M1 24.500h28" stroke="#6e8c42" /></svg>
);

function DesktopPanel() {
  return (
    <Panel>
      <Launcher $w={43}>
        <svg width="34" height="36" viewBox="0 0 34 34" fill="none"><circle cx="17" cy="18" r="14.800" stroke="#e4e4e4" strokeWidth="2.400" /><path d="M10 10v10q0 5 5 5h5q5 0 5-5v-4q0-2.500-2.500-2.500T20 16v4M20 16q0-2.500-2.500-2.500T15 16v4" stroke="#e4e4e4" strokeWidth="2.800" /></svg>
      </Launcher>
      <Launcher $w={47}>
        <svg width="30" height="24" viewBox="0 0 30 24"><rect width="30" height="24" fill="#8db158" /><rect width="30" height="5" fill="#648240" /><circle cx="5" cy="2.800" r="1.200" fill="#fff" /></svg>
      </Launcher>
      <Launcher $w={40}>
        <svg width="32" height="32" viewBox="0 0 24 24" fill="#2f6794" stroke="#fff" strokeWidth=".9">
          <path d="M8 3C3 0 1 4 2 9c1 4 3 7 5 6l2-3zM16 2c5-2 8 1 6 6-1 4-3 7-5 6l-2-3z" />
          <path d="M8 3c2-2.500 8-2.500 9 1 1 3 .5 8-.5 10q3 1 5 0-2 3-5 2.500c0 3 .5 7-2.500 7s-3-5-3-8c-4 1-5-1-4-5z" />
        </svg>
      </Launcher>
      <Launcher $run>
        <svg width="38" height="38" viewBox="0 0 38 38" fontFamily={ui}>
          <circle cx="19" cy="20" r="14" fill="#f4f4f4" /><path d="M8.500 23a11 11 0 0 0 21 0" stroke="#26a366" strokeWidth="2.600" fill="none" /><path d="M8.500 17a11 11 0 0 1 21 0" stroke="#3a9ae0" strokeWidth="2.600" fill="none" />
          <path d="M13 15l5 4-5 4" stroke="#3a8fd8" strokeWidth="2.600" fill="none" /><path d="M25 17l-5 4 5 4" stroke="#26a366" strokeWidth="2.600" fill="none" />
          <circle cx="9" cy="7" r="7" fill="#4b4b4b" /><text x="9" y="11" fontSize="11" textAnchor="middle" fill="#ddd">2</text>
        </svg>
      </Launcher>
      <Launcher>
        <svg width="30" height="30" viewBox="0 0 30 30"><rect x=".5" y=".5" width="29" height="28" rx="4" fill="#2b2b2b" stroke="#111" /><text x="4" y="11" fontSize="10" fontWeight="700" fill="#eee" fontFamily="Liberation Mono, monospace">$_</text></svg>
      </Launcher>
      <Launcher><FolderIcon /></Launcher>
      <Launcher $bg="#575757" $run>
        <svg width="28" height="28" viewBox="0 0 28 28"><rect width="28" height="28" rx="5" fill="#ff7139" /><FaFirefoxBrowser x="4" y="4" size={20} color="#fff" /></svg>
      </Launcher>
      <Launcher $run>
        <svg width="28" height="28" viewBox="0 0 28 28"><defs><linearGradient id="pc" x2="1" y2="1"><stop stopColor="#21e75a" /><stop offset=".35" stopColor="#c7ee2e" /><stop offset="1" stopColor="#f8f03a" /></linearGradient></defs><rect width="28" height="28" fill="url(#pc)" /><rect x="3" y="4" width="22" height="21" fill="#000" /><text x="5" y="14.500" fontSize="10.500" fontWeight="700" fill="#fff" fontFamily={ui}>PC</text><path d="M6 21h8" stroke="#fff" strokeWidth="1.500" /></svg>
      </Launcher>
      <Launcher $run>
        <svg width="28" height="28" viewBox="0 0 28 28"><defs><linearGradient id="bx" x2="0" y2="1"><stop stopColor="#efc9a0" /><stop offset="1" stopColor="#b5926f" /></linearGradient></defs><rect width="28" height="28" rx="5" fill="url(#bx)" /><path d="M0 14h28" stroke="#9a7652" /><path d="M0 15h28" stroke="#f1d3b2" /></svg>
      </Launcher>
      <Launcher $bg="#f04a50"><FolderIcon /></Launcher>
      <Tray>
        <svg width="18" height="18" viewBox="0 0 18 18" fill="none" stroke="#ddd8c8" strokeWidth="1.300"><path d="M1 4v8M1 14v2M4.500 4v12M6.500 5v11M11 8v8M14 8v8M6 4.500h2" /><path d="M8.500 1.500h9v6h-9z" /></svg>
        <Gap $w={14} />
        <svg width="24" height="24" viewBox="0 0 24 24" fill="none"><circle cx="12" cy="12" r="11" fill="#fff" /><path d="M2 15A10.500 10.500 0 0 1 19 4" stroke="#26a366" strokeWidth="2.500" /><path d="M21.500 7A10.500 10.500 0 0 1 4 19" stroke="#3aa0e0" strokeWidth="2.500" /><path d="M8 7l5 3.500L8 13.500" stroke="#3aa0e0" strokeWidth="2.200" /><path d="M16 10l-5 4 5 3" stroke="#26a366" strokeWidth="2.200" /></svg>
        <Gap $w={9} />
        <svg width="14" height="16" viewBox="0 0 14 16" fill="none" stroke="#e4e4e4" strokeWidth="1.600"><path d="M1 3h12v12H1zM7 5.500v4.500M7 11.500v2" /><circle cx="7" cy="1.800" r="1.300" /></svg>
        <Gap $w={10} />
        <svg width="17" height="17" viewBox="0 0 17 17"><path d="M8 1q3 2 7 2 0 9-7 13Q1 12 1 3q4 0 7-2z" fill="#3a3a3a" stroke="#e4e4e4" strokeWidth="1.400" /><path d="M8 4q2 1 4.500 1 0 5-4.500 8z" fill="#aaa" /><circle cx="13" cy="13.500" r="3.200" fill="#dd6a36" /></svg>
        <Gap $w={10} />
        <MdPrint size={17} />
        <Gap $w={10} />
        <svg width="14" height="16" viewBox="0 0 14 16" fill="none" stroke="#e4e4e4" strokeWidth="1.500"><rect x="1" y="1" width="12" height="14" rx="1" /><path d="M4 10.500h6" /><path d="M4 8.500h6L7 5z" fill="#e4e4e4" stroke="none" /></svg>
        <Gap $w={12} />
        <svg width="27" height="18" viewBox="0 0 27 18"><path d="M0 0h27v6H0z" fill="#fff" /><path d="M0 6h27v6H0z" fill="#1414a0" /><path d="M0 12h27v6H0z" fill="#e01414" /></svg>
        <Gap $w={11} />
        <MdWifi size={18} />
        <Gap $w={9} />
        <svg width="15" height="15" viewBox="0 0 15 15" fill="#e4e4e4"><path d="M4 1h10v11h-1.500V4h-7v9H4z" /><circle cx="3" cy="12.500" r="2.300" /><circle cx="11.800" cy="12" r="2.300" /></svg>
        <Gap $w={11} />
        <TimeText><Fit w={33}>15:57</Fit></TimeText>
      </Tray>
    </Panel>
  );
}

export default function App() {
  return (
    <Screen>
      <Global />
      <Browser />
      <ParticipantStrip />
      <Presentation />
      <CallControls />
      <DesktopPanel />
    </Screen>
  );
}
